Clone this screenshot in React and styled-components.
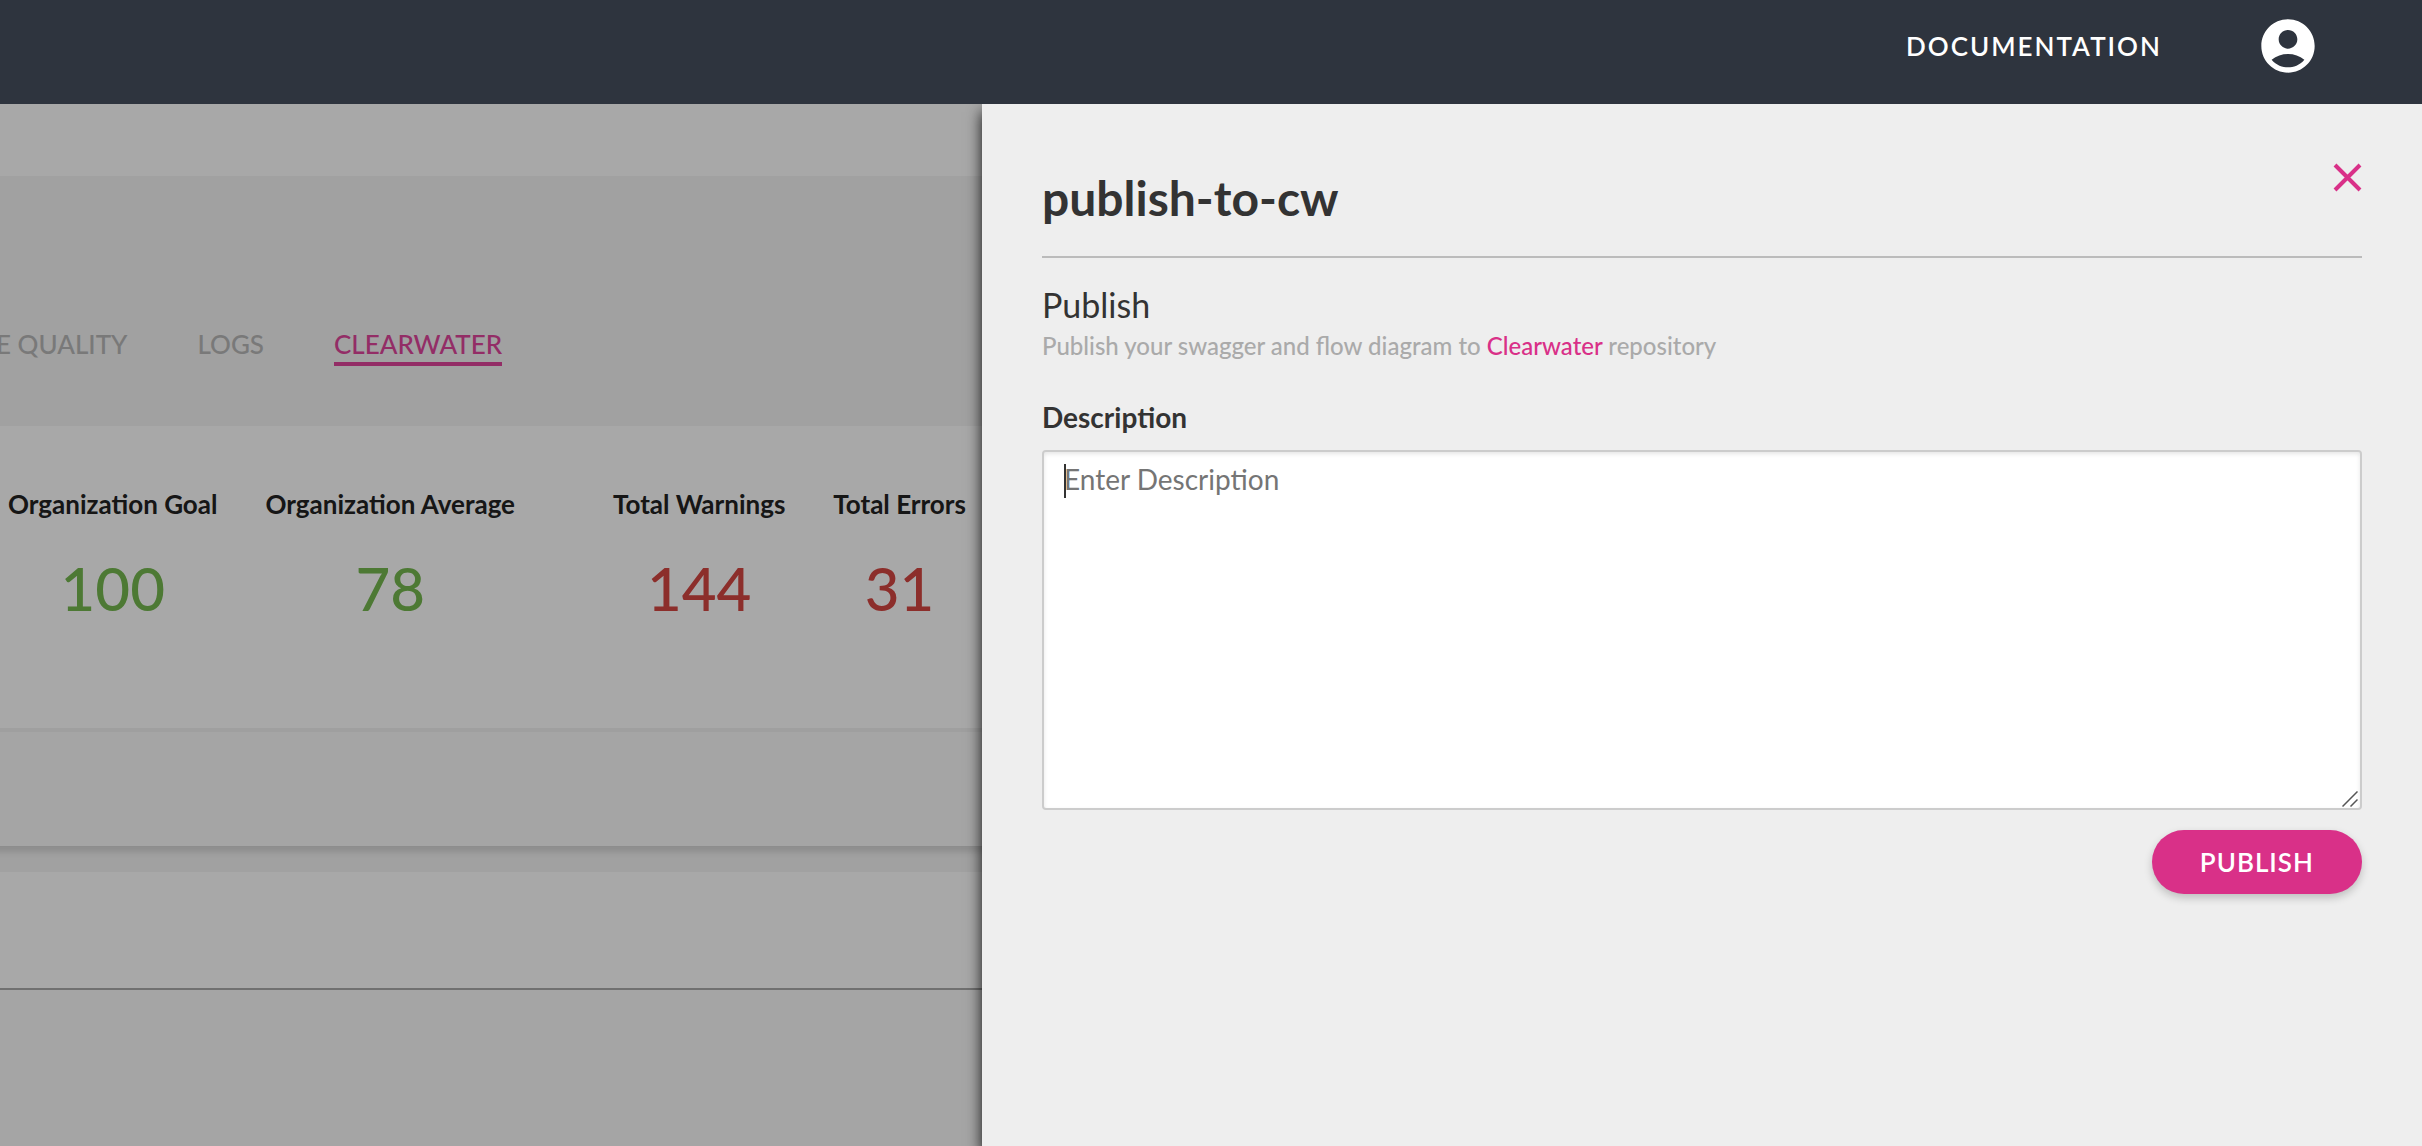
import React from "react";
import styled, { createGlobalStyle } from "styled-components";
import { MdAccountCircle } from "react-icons/md";

const pink = "#d93088";

const GlobalStyle = createGlobalStyle`
  *, *::before, *::after {
    box-sizing: border-box;
  }
  body {
    margin: 0;
    font-family: Lato, "Open Sans", sans-serif;
    color: #333;
    background: #f4f4f4;
  }
  h1, h2, p, dl, dd {
    margin: 0;
  }
`;

const Page = styled.div`
  display: flex;
  flex-direction: column;
  min-height: 100vh;
`;

const Header = styled.header`
  display: flex;
  align-items: center;
  justify-content: flex-end;
  gap: 94px;
  padding: 14px 102px 26px;
  background: #2e343e;
`;

const HeaderLink = styled.a`
  color: #fff;
  font-size: 26px;
  line-height: 32px;
  font-weight: 600;
  letter-spacing: 2px;
  text-decoration: none;
`;

const IconButton = styled.button`
  display: flex;
  padding: 0;
  border: 0;
  background: none;
  color: ${(p) => p.$color};
  cursor: pointer;
`;

const Body = styled.div`
  flex: 1;
  display: grid;
  grid-template-columns: minmax(0, 491fr) minmax(0, 720fr);
`;

const Backdrop = styled.main`
  position: relative;
  display: flex;
  flex-direction: column;
  overflow: hidden;
  background: #f4f4f4;

  &::after {
    content: "";
    position: absolute;
    inset: 0;
    background: rgba(0, 0, 0, 0.34);
  }
`;

const TitleStrip = styled.div`
  height: 72px;
  background: #fff;
`;

const Tabs = styled.nav`
  display: flex;
  gap: 70px;
  margin-left: -4px;
  padding: 154px 0 60px;
`;

const Tab = styled.a`
  padding-bottom: 4px;
  border-bottom: 4px solid ${(p) => (p.$active ? "#df459c" : "transparent")};
  color: ${(p) => (p.$active ? "#df459c" : "#b8b8b8")};
  font-size: 26px;
  line-height: 28px;
  font-weight: 500;
  white-space: nowrap;
  text-decoration: none;
`;

const Stats = styled.dl`
  display: flex;
  gap: 98px;
  padding: 60px 8px 108px;
  border-bottom: 4px solid #f2f2f2;
  background: #fff;
`;

const StatGroup = styled.div`
  display: flex;
  gap: 48px;
`;

const Stat = styled.div`
  display: flex;
  flex-direction: column;
  align-items: center;
  gap: 34px;
`;

const StatLabel = styled.dt`
  color: #222;
  font-size: 26px;
  line-height: 36px;
  font-weight: 700;
  white-space: nowrap;
`;

const StatValue = styled.dd`
  color: ${(p) => p.$color};
  font-size: 60px;
  line-height: 64px;
  font-weight: 500;
`;

const SummaryFooter = styled.div`
  height: 114px;
  margin: 0 -12px;
  background: #fafafa;
  box-shadow: 0 6px 6px rgba(0, 0, 0, 0.12);
`;

const ListHeader = styled.div`
  height: 118px;
  margin-top: 26px;
  border-bottom: 2px solid #aaa;
  background: #fff;
`;

const ListBody = styled.div`
  flex: 1;
  background: #fafafa;
`;

const Drawer = styled.aside`
  position: relative;
  padding: 56px 60px;
  background: #eee;
  box-shadow: 0 8px 14px rgba(0, 0, 0, 0.9);
  clip-path: inset(0 0 0 -40px);
`;

const DrawerHeader = styled.div`
  display: flex;
  align-items: flex-start;
  justify-content: space-between;
  padding-bottom: 28px;
  border-bottom: 2px solid #bbb;
`;

const DrawerTitle = styled.h1`
  padding-top: 8px;
  font-size: 48px;
  line-height: 60px;
  font-weight: 700;
`;

const CloseIcon = styled.svg`
  display: block;
  margin-top: 3px;
`;

const SectionTitle = styled.h2`
  margin-top: 26px;
  font-size: 34px;
  line-height: 42px;
  font-weight: 400;
`;

const SectionText = styled.p`
  color: #aaa;
  font-size: 24px;
  line-height: 40px;
  font-weight: 500;
`;

const TextLink = styled.a`
  color: ${pink};
  text-decoration: none;
`;

const Form = styled.form`
  display: flex;
  flex-direction: column;
  margin-top: 34px;
`;

const Label = styled.label`
  font-size: 28px;
  line-height: 34px;
  font-weight: 700;
`;

const Field = styled.div`
  position: relative;
  display: flex;
  margin: 16px 0 20px;
`;

const TextArea = styled.textarea`
  width: 100%;
  height: 360px;
  padding: 10px 20px;
  border: 2px solid #ccc;
  border-radius: 4px;
  outline: 0;
  background: #fff;
  box-shadow: inset 0 2px 4px rgba(0, 0, 0, 0.1);
  color: #333;
  font-family: inherit;
  font-size: 28px;
  line-height: 34px;
  resize: vertical;

  &::placeholder {
    color: #757575;
    opacity: 1;
  }
  &::-webkit-resizer {
    background: transparent;
  }
`;

const Caret = styled.span`
  position: absolute;
  top: 14px;
  left: 22px;
  width: 2px;
  height: 34px;
  background: #333;
`;

const Grip = styled.svg`
  position: absolute;
  right: 4px;
  bottom: 3px;
  pointer-events: none;
`;

const PublishButton = styled.button`
  align-self: flex-end;
  padding: 14px 48px;
  border: 0;
  border-radius: 32px;
  background: ${pink};
  box-shadow: 0 4px 8px rgba(0, 0, 0, 0.2);
  color: #fff;
  font-family: inherit;
  font-size: 26px;
  line-height: 36px;
  font-weight: 600;
  letter-spacing: 1px;
  cursor: pointer;
`;

const tabs = ["E QUALITY", "LOGS", "CLEARWATER"];

const statGroups = [
  {
    color: "#75b850",
    items: [
      ["Organization Goal", "100"],
      ["Organization Average", "78"],
    ],
  },
  {
    color: "#d54742",
    items: [
      ["Total Warnings", "144"],
      ["Total Errors", "31"],
    ],
  },
];

export default function App() {
  return (
    <Page>
      <GlobalStyle />
      <Header>
        <HeaderLink href="#documentation">DOCUMENTATION</HeaderLink>
        <IconButton type="button" $color="#fff" aria-label="Account">
          <MdAccountCircle size={64} />
        </IconButton>
      </Header>
      <Body>
        <Backdrop>
          <TitleStrip />
          <Tabs>
            {tabs.map((tab) => (
              <Tab key={tab} href="#tab" $active={tab === "CLEARWATER"}>
                {tab}
              </Tab>
            ))}
          </Tabs>
          <Stats>
            {statGroups.map((group) => (
              <StatGroup key={group.color}>
                {group.items.map(([label, value]) => (
                  <Stat key={label}>
                    <StatLabel>{label}</StatLabel>
                    <StatValue $color={group.color}>{value}</StatValue>
                  </Stat>
                ))}
              </StatGroup>
            ))}
          </Stats>
          <SummaryFooter />
          <ListHeader />
          <ListBody />
        </Backdrop>
        <Drawer>
          <DrawerHeader>
            <DrawerTitle>publish-to-cw</DrawerTitle>
            <IconButton type="button" $color={pink} aria-label="Close">
              <CloseIcon width="29" height="29" viewBox="0 0 29 29">
                <path
                  d="M2 2 27 27M27 2 2 27"
                  stroke="currentColor"
                  strokeWidth="4"
                />
              </CloseIcon>
            </IconButton>
          </DrawerHeader>
          <SectionTitle>Publish</SectionTitle>
          <SectionText>
            Publish your swagger and flow diagram to{" "}
            <TextLink href="#clearwater">Clearwater</TextLink> repository
          </SectionText>
          <Form onSubmit={(e) => e.preventDefault()}>
            <Label htmlFor="description">Description</Label>
            <Field>
              <TextArea id="description" placeholder="Enter Description" />
              <Caret />
              <Grip width="16" height="16" viewBox="0 0 16 16">
                <path
                  d="M0.5 15.5 15.5 0.5M8.5 15.5 15.5 8.5"
                  stroke="#555"
                  strokeWidth="1.5"
                />
              </Grip>
            </Field>
            <PublishButton type="submit">PUBLISH</PublishButton>
          </Form>
        </Drawer>
      </Body>
    </Page>
  );
}
